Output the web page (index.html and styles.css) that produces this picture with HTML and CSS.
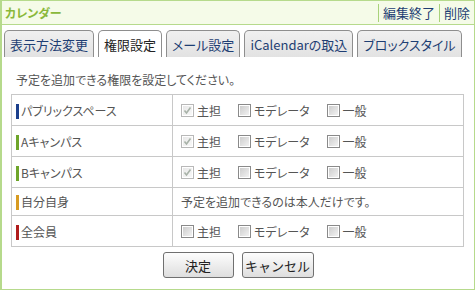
FILE: index.html
```html
<!DOCTYPE html>
<html lang="ja">
<head>
<meta charset="utf-8">
<link rel="stylesheet" href="styles.css">
</head>
<body>
<div class="frame">
  <div class="header">
    <span class="title">カレンダー</span>
    <div class="links">
      <span class="sep"></span><a class="link">編集終了</a><span class="sep"></span><a class="link">削除</a>
    </div>
  </div>
  <div class="tabs">
    <span class="tab">表示方法変更</span>
    <span class="tab active">権限設定</span>
    <span class="tab">メール設定</span>
    <span class="tab">iCalendarの取込</span>
    <span class="tab">ブロックスタイル</span>
  </div>
  <div class="panel">
    <p class="intro">予定を追加できる権限を設定してください。</p>
    <table class="perm">
      <tr>
        <th><span class="bar blue"></span>パブリックスペース</th>
        <td><div class="opts">
          <label class="opt"><span class="cb on"><svg viewBox="0 0 11 11"><path d="M2.5 5.5 L4.5 8 L8.5 2.5" /></svg></span>主担</label>
          <label class="opt"><span class="cb"></span>モデレータ</label>
          <label class="opt"><span class="cb"></span>一般</label>
        </div></td>
      </tr>
      <tr>
        <th><span class="bar green"></span>Aキャンパス</th>
        <td><div class="opts">
          <label class="opt"><span class="cb on"><svg viewBox="0 0 11 11"><path d="M2.5 5.5 L4.5 8 L8.5 2.5" /></svg></span>主担</label>
          <label class="opt"><span class="cb"></span>モデレータ</label>
          <label class="opt"><span class="cb"></span>一般</label>
        </div></td>
      </tr>
      <tr>
        <th><span class="bar green"></span>Bキャンパス</th>
        <td><div class="opts">
          <label class="opt"><span class="cb on"><svg viewBox="0 0 11 11"><path d="M2.5 5.5 L4.5 8 L8.5 2.5" /></svg></span>主担</label>
          <label class="opt"><span class="cb"></span>モデレータ</label>
          <label class="opt"><span class="cb"></span>一般</label>
        </div></td>
      </tr>
      <tr class="short">
        <th><span class="bar orange"></span>自分自身</th>
        <td class="note">予定を追加できるのは本人だけです。</td>
      </tr>
      <tr>
        <th><span class="bar red"></span>全会員</th>
        <td><div class="opts">
          <label class="opt"><span class="cb"></span>主担</label>
          <label class="opt"><span class="cb"></span>モデレータ</label>
          <label class="opt"><span class="cb"></span>一般</label>
        </div></td>
      </tr>
    </table>
    <div class="buttons">
      <button class="btn ok">決定</button>
      <button class="btn cancel">キャンセル</button>
    </div>
  </div>
</div>
</body>
</html>
```
FILE: styles.css
```css
* { box-sizing: border-box; }
html, body { margin: 0; padding: 0; background: #fff; }
body {
  font-family: "Noto Sans CJK JP", "Noto Sans", sans-serif;
  font-size: 12px;
  font-feature-settings: "palt";
  color: #555;
}
.frame {
  width: 475px;
  height: 290px;
  border: 1px solid #b6da8c;
  border-left-width: 2px;
  display: flex;
  flex-direction: column;
}
.header {
  height: 24px;
  background: #f5fbe8;
  border-bottom: 1px solid #b6da8c;
  display: flex;
  align-items: center;
  justify-content: space-between;
  padding-left: 3px;
}
.title {
  color: #8ab83a;
  font-weight: bold;
  font-size: 12px;
}
.links {
  display: flex;
  align-items: center;
  height: 100%;
}
.sep {
  width: 1px;
  height: 18px;
  background: #a9d27a;
}
.link {
  color: #1e3e73;
  font-size: 13px;
  padding: 0 4px 0 4px;
}
.tabs {
  display: flex;
  align-items: flex-end;
  gap: 4px;
  padding: 4px 0 0 2px;
  height: 32px;
}
.tab {
  flex-shrink: 0;
  white-space: nowrap;
  height: 27px;
  border: 1px solid #8e8e8e;
  border-bottom: none;
  border-radius: 5px 5px 0 0;
  background: linear-gradient(#f0f0f0, #e2e2e2);
  color: #1e3e73;
  font-size: 13px;
  padding: 0 5px;
  display: flex;
  align-items: center;
}
.tab.active {
  background: #fff;
  color: #222;
}
.panel {
  padding: 0 9px 0 9px;
}
.intro {
  margin: 0;
  padding: 13px 0 0 5px;
  height: 37px;
  line-height: 20px;
}
.perm {
  width: 453px;
  border-collapse: collapse;
  border: 1px solid #c8c8c8;
}
.perm th, .perm td {
  border: 1px solid #c8c8c8;
  height: 31px;
  padding: 0;
  font-weight: normal;
  text-align: left;
  vertical-align: middle;
}
.perm tr.short th, .perm tr.short td { height: 28px; }
.perm th {
  width: 161px;
  padding-left: 4px;
}
.perm td { padding-left: 8px; }
.bar {
  display: inline-block;
  width: 3px;
  height: 15px;
  vertical-align: -3px;
  margin-right: 2px;
}
.bar.blue { background: #1b3f8c; }
.bar.green { background: #6ea52a; }
.bar.orange { background: #d79b22; }
.bar.red { background: #b01c1c; }
.opts {
  display: flex;
  align-items: center;
  gap: 17px;
}
.opt {
  display: flex;
  align-items: center;
  gap: 3px;
}
.cb {
  width: 13px;
  height: 13px;
  border: 1px solid #8a8a8a;
  background: linear-gradient(135deg, #c9c9c9, #f6f6f6);
  box-shadow: inset 0 0 0 1px #fff;
  display: inline-block;
}
.cb.on {
  border-color: #b8b8b8;
  background: linear-gradient(135deg, #e6e6e6, #fafafa);
}
.cb svg {
  display: block;
  width: 11px;
  height: 11px;
}
.cb svg path {
  fill: none;
  stroke: #a8b2a8;
  stroke-width: 1.6;
}
.buttons {
  display: flex;
  justify-content: center;
  gap: 8px;
  padding-top: 5px;
}
.btn {
  height: 26px;
  border: 1px solid #707070;
  border-radius: 3px;
  background: linear-gradient(#fdfdfd, #dedede);
  font-family: inherit;
  font-size: 13px;
  color: #222;
  padding: 0;
}
.btn.ok { width: 71px; }
.btn.cancel { width: 72px; }
```
